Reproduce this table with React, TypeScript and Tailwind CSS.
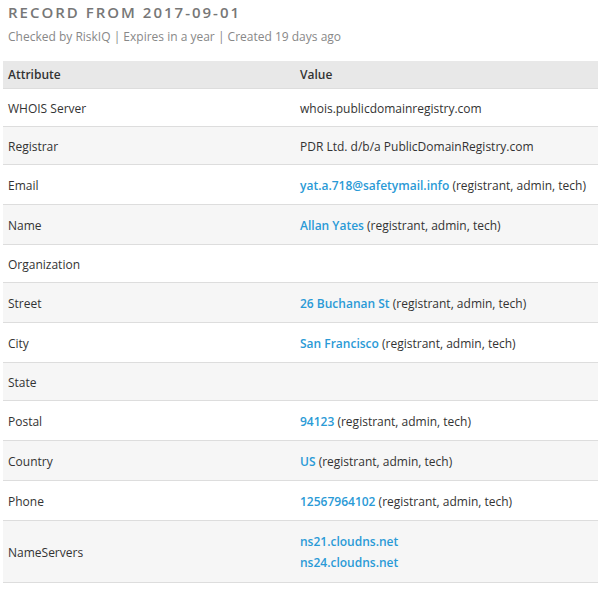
const rows: { label: string; value?: string; link?: string; links?: string[]; role?: boolean }[] = [
  { label: 'WHOIS Server', value: 'whois.publicdomainregistry.com' },
  { label: 'Registrar', value: 'PDR Ltd. d/b/a PublicDomainRegistry.com' },
  { label: 'Email', link: 'yat.a.718@safetymail.info', role: true },
  { label: 'Name', link: 'Allan Yates', role: true },
  { label: 'Organization' },
  { label: 'Street', link: '26 Buchanan St', role: true },
  { label: 'City', link: 'San Francisco', role: true },
  { label: 'State' },
  { label: 'Postal', link: '94123', role: true },
  { label: 'Country', link: 'US', role: true },
  { label: 'Phone', link: '12567964102', role: true },
  { label: 'NameServers', links: ['ns21.cloudns.net', 'ns24.cloudns.net'] },
];

export default function App() {
  return (
    <div className="w-[598px] h-[594px] overflow-hidden bg-white font-['Open_Sans',sans-serif] text-[12px] text-[#333]">
      <div className="pl-[8px] pt-[2px]">
        <h1 className="text-[15px] font-semibold tracking-[2px] text-[#777] leading-[20px]">RECORD FROM 2017-09-01</h1>
        <p className="mt-[7px] text-[12px] text-[#888] leading-[16px]">Checked by RiskIQ | Expires in a year | Created 19 days ago</p>
      </div>
      <table className="ml-[3px] mt-[16px] w-[595px] border-collapse">
        <thead>
          <tr className="bg-[#e8e8e8] border-b border-[#ddd]">
            <th className="w-[297px] h-[27px] pl-[5px] pt-[2px] text-left font-semibold text-[#333]">Attribute</th>
            <th className="pt-[2px] text-left font-semibold text-[#333]">Value</th>
          </tr>
        </thead>
        <tbody>
          {rows.map((r, i) => (
            <tr key={r.label} className={`border-b border-[#ddd] ${i % 2 === 1 ? 'bg-[#f6f6f6]' : 'bg-white'}`}>
              <td className={`pl-[5px] pt-[4px] ${r.link ? 'h-[40px]' : 'h-[38px]'} align-middle`}>{r.label}</td>
              <td className="pt-[4px] align-middle">
                {r.value}
                {r.link && (
                  <>
                    <span className="text-[#2a9ad6] font-semibold">{r.link}</span> (registrant, admin, tech)
                  </>
                )}
                {r.links && (
                  <div className="flex flex-col gap-[5px] pt-[9px] pb-[11px]">
                    {r.links.map((l) => (
                      <span key={l} className="text-[#2a9ad6] font-semibold leading-[16px]">{l}</span>
                    ))}
                  </div>
                )}
              </td>
            </tr>
          ))}
        </tbody>
      </table>
    </div>
  );
}
